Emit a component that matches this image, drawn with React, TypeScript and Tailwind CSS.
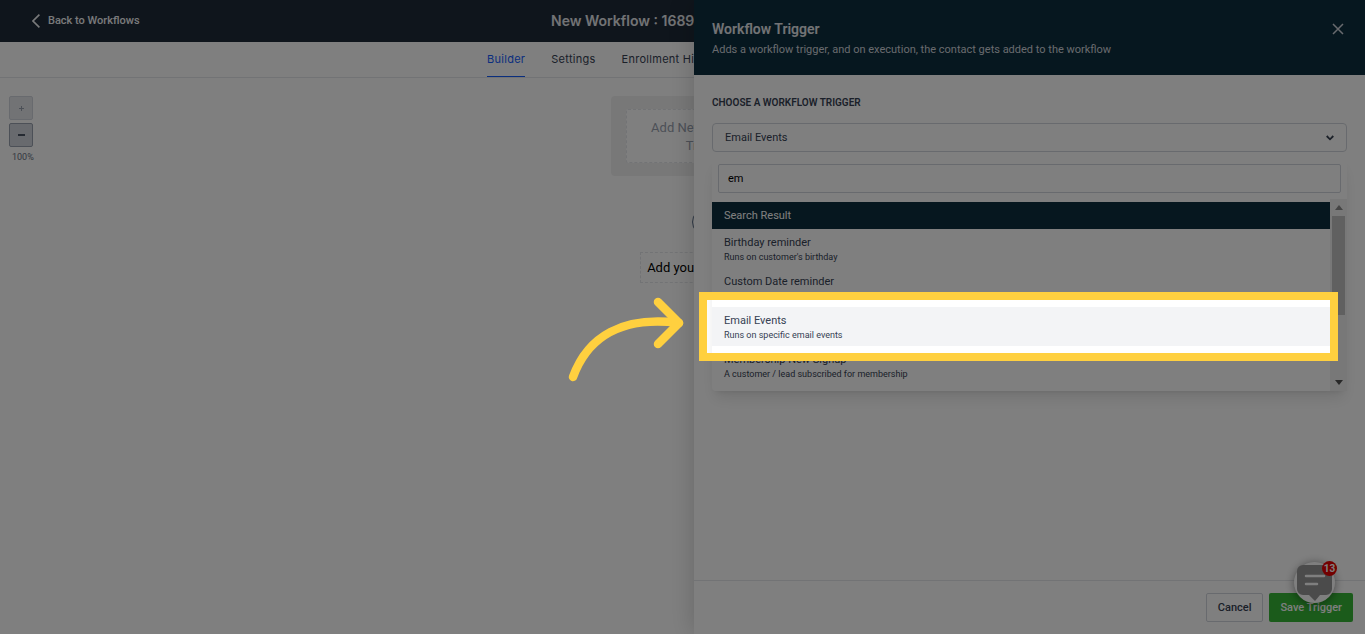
import React from 'react'

const tabs = ['Builder', 'Settings', 'Enrollment History']

const triggers = [
  { name: 'Birthday reminder', text: "Runs on customer's birthday" },
  { name: 'Custom Date reminder', text: 'Runs on custom date' },
  { name: 'Email Events', text: 'Runs on specific email events', active: true },
  { name: 'Membership New Signup', text: 'A customer / lead subscribed for membership' },
]

const TopBar: React.FC = () => {
  return (
    <header className="grid h-[42px] grid-cols-3 items-center bg-[#1e2a38] text-white">
      <a href="#" className="flex items-center gap-2 pl-8 text-[11px] font-medium text-gray-100">
        <svg width="8" height="14" viewBox="0 0 8 14" fill="none" stroke="currentColor" strokeWidth="1.6">
          <path d="M7.4 0.6 1 7l6.4 6.4" />
        </svg>
        Back to Workflows
      </a>
      <h1 className="pl-24 font-[Inter] text-sm font-semibold whitespace-nowrap text-gray-200">
        New Workflow : 1689
      </h1>
    </header>
  )
}

const Tabs: React.FC = () => {
  return (
    <nav className="flex h-9 justify-center gap-[26px] border-b border-gray-200 pr-39 font-[Inter] text-[11px] tracking-wide text-gray-700">
      {tabs.map((tab, i) => (
        <a
          key={tab}
          href="#"
          className={i === 0 ? 'border-b border-blue-600 pt-2 leading-[18px] text-blue-600' : 'pt-2 leading-[18px]'}
        >
          {tab}
        </a>
      ))}
    </nav>
  )
}

const Canvas: React.FC = () => {
  return (
    <div className="flex flex-1 pt-[18px]">
      <div className="flex w-[47px] flex-col gap-[3px] pl-[9px]">
        <button aria-label="Zoom in" className="flex size-6 items-center justify-center rounded-xs border border-gray-300 bg-gray-200 text-gray-400">
          <svg width="5" height="5" viewBox="0 0 5 5" stroke="currentColor">
            <path d="M0 2.5h5M2.5 0v5" />
          </svg>
        </button>
        <button aria-label="Zoom out" className="flex size-6 items-center justify-center rounded-xs border border-gray-400 bg-gray-300 text-gray-600">
          <svg width="7" height="2" viewBox="0 0 7 2" stroke="currentColor" strokeWidth="2">
            <path d="M0 1h7" />
          </svg>
        </button>
        <span className="pl-[3px] text-[9px] leading-[14px] text-gray-500">100%</span>
      </div>
      <main className="flex flex-1 flex-col items-center">
        <div className="w-[190px] rounded-sm bg-[#f1f1f1] px-[15px] py-[13px]">
          <button className="h-[54px] w-full rounded-xs border border-dashed border-gray-200 bg-white px-5 pt-px text-[13px] leading-[18px] text-gray-400">
            Add New Workflow Trigger
          </button>
        </div>
        <button aria-label="Add step" className="mt-8 flex size-7 items-center justify-center rounded-full border border-slate-500 text-slate-500">
          <svg width="12" height="12" viewBox="0 0 12 12" stroke="currentColor" strokeWidth="2">
            <path d="M6 0v12M0 6h12" />
          </svg>
        </button>
        <button className="mt-4 h-[31px] border border-dashed border-gray-200 px-[6px] text-[13px] whitespace-nowrap text-black">
          Add your first Action
        </button>
      </main>
    </div>
  )
}

const TriggerList: React.FC = () => {
  return (
    <div className="relative mt-[5px] rounded-sm shadow-lg">
      <div className="px-[6px] pt-[7px] pb-[6px]">
        <input
          aria-label="Search triggers"
          defaultValue="em"
          className="block h-[29px] w-full rounded-xs border border-gray-300 px-[9px] text-[11px] text-black"
        />
      </div>
      <div className="flex h-48">
        <div className="flex-1 overflow-hidden pt-[3px]">
          <h3 className="h-[27px] bg-[#0c2e3e] pl-3 text-[11px] leading-[27px] text-white">Search Result</h3>
          <ul>
            {triggers.map((trigger) => (
              <li key={trigger.name}>
                <button
                  className={
                    trigger.active
                      ? 'block h-[39px] w-full bg-gray-100 pl-3 text-left text-gray-700'
                      : 'block h-[39px] w-full pl-3 text-left text-gray-700'
                  }
                >
                  <span className="block text-[11px] leading-4">{trigger.name}</span>
                  <span className="block text-[9px] leading-3">{trigger.text}</span>
                </button>
              </li>
            ))}
          </ul>
        </div>
        <div className="flex w-[17px] flex-col items-center justify-between bg-[#f1f1f1] py-[6px]">
          <svg width="8" height="5" viewBox="0 0 8 5" fill="#8a8a8a">
            <path d="M4 0l4 5H0z" />
          </svg>
          <div className="mb-auto mt-[6px] h-[99px] w-[13px] bg-[#c1c1c1]" />
          <svg width="8" height="5" viewBox="0 0 8 5" fill="#505050">
            <path d="M4 5l4-5H0z" />
          </svg>
        </div>
      </div>
      {/* spotlight: the spread shadow dims everything around the frame */}
      <div className="pointer-events-none absolute top-[135px] right-[9px] -left-[13px] h-[69px] border-8 border-[#ffd03f] shadow-[0_0_0_2000px_rgba(0,0,0,0.5)]">
        <svg className="absolute -top-[3px] -left-[140px]" width="120" height="90" viewBox="0 0 120 90" fill="none" stroke="#ffd03f" strokeWidth="8.5" strokeLinecap="round" strokeLinejoin="round">
          <path d="M6 80C21 39 56 19 112 26" />
          <path d="M91 5l21 21-21 21" />
        </svg>
      </div>
    </div>
  )
}

const ChatWidget: React.FC = () => {
  return (
    <button aria-label="Open chat" className="absolute right-[30px] bottom-[31px] size-[41px] rounded-full bg-white shadow-[0_1px_10px_rgba(0,0,0,0.45)]">
      <svg className="mx-auto" width="35" height="36" viewBox="0 0 35 36">
        <path d="M6 0h23a6 6 0 0 1 6 6v18a6 6 0 0 1-6 6h-6l-5 6-6-6H6a6 6 0 0 1-6-6V6a6 6 0 0 1 6-6z" fill="#969696" />
        <path d="M9 11h18M9 19h11" stroke="#fff" strokeWidth="2.5" strokeLinecap="round" />
      </svg>
      <span className="absolute -top-px -right-[2px] flex size-[15px] items-center justify-center rounded-full bg-[#e60000] text-[10px] font-bold text-white">
        13
      </span>
    </button>
  )
}

const TriggerPanel: React.FC = () => {
  return (
    <section className="absolute inset-y-0 right-0 flex w-[671px] max-w-full flex-col bg-white shadow-[0_0_24px_rgba(0,0,0,0.2)]">
      <ChatWidget />
      <div className="flex h-[75px] items-start justify-between bg-[#0c2e3e] pt-5 pr-[21px] pl-[18px] text-white">
        <div>
          <h2 className="text-sm leading-[19px] font-semibold text-gray-200">Workflow Trigger</h2>
          <p className="text-[11px] leading-[22px] text-gray-300">
            Adds a workflow trigger, and on execution, the contact gets added to the workflow
          </p>
        </div>
        <button aria-label="Close" className="mt-[3px] text-gray-300">
          <svg width="12" height="12" viewBox="0 0 12 12" stroke="currentColor" strokeWidth="1.5">
            <path d="M1 1l10 10M11 1L1 11" />
          </svg>
        </button>
      </div>
      <div className="flex-1 px-[18px] pt-5">
        <label htmlFor="trigger" className="block text-[10px] leading-4 font-semibold text-gray-700">
          CHOOSE A WORKFLOW TRIGGER
        </label>
        <div className="relative mt-3">
          <select id="trigger" className="h-[29px] w-full appearance-none rounded-sm border border-gray-300 px-3 pt-px text-[11px] text-gray-700">
            <option>Email Events</option>
          </select>
          <svg className="absolute top-3 right-[13px]" width="8" height="6" viewBox="0 0 8 6" fill="none" stroke="#374151" strokeWidth="1.8">
            <path d="M0.7 1l3.3 3.3L7.3 1" />
          </svg>
        </div>
        <TriggerList />
      </div>
      <div className="flex h-[54px] items-center justify-end gap-[6px] border-t border-gray-200 pr-3 text-[11px] font-medium">
        <button className="h-[29px] rounded-xs border border-gray-300 px-[11px] pt-px text-gray-700">Cancel</button>
        <button className="h-[29px] rounded-xs bg-[#37b637] px-[11px] pt-px text-white">Save Trigger</button>
      </div>
    </section>
  )
}

export default function App() {
  return (
    <div className="relative flex h-screen flex-col overflow-hidden bg-white font-['Roboto',sans-serif]">
      <TopBar />
      <Tabs />
      <Canvas />
      <TriggerPanel />
    </div>
  )
}
